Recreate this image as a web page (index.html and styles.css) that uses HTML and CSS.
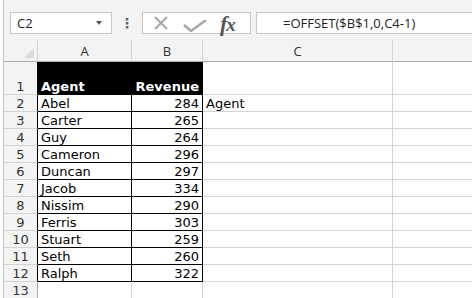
FILE: index.html
```html
<!DOCTYPE html>
<html lang="en">
<head>
  <meta charset="UTF-8" />
  <title>OFFSET example</title>
  <link rel="stylesheet" href="styles.css">
</head>
<body>
  <div class="app">
    <!-- Formula bar -->
    <div class="formula-bar">
      <div class="name-box">
        <span>C2</span>
        <span class="arrow"></span>
      </div>
      <div class="dots">⋮</div>
      <div class="fx-box">
        <svg class="ico" width="16" height="16" viewBox="0 0 16 16">
          <path d="M2 2 L14 14 M14 2 L2 14" stroke="#a8a8a8" stroke-width="2" fill="none"/>
        </svg>
        <svg class="ico ico-check" width="24" height="12" viewBox="0 0 24 12">
          <path d="M1 5 L8 11 L23 0" stroke="#a8a8a8" stroke-width="2.6" fill="none"/>
        </svg>
        <span class="fx">f<i>x</i></span>
      </div>
      <div class="formula">=OFFSET($B$1,0,C4-1)</div>
    </div>

    <!-- Sheet -->
    <div class="sheet" id="sheet">
      <div class="corner"><span class="tri"></span></div>
      <div class="col-head">A</div>
      <div class="col-head">B</div>
      <div class="col-head">C</div>
      <div class="col-head last"></div>
    </div>
  </div>

  <script>
    const rows = [
      ["Abel", 284], ["Carter", 265], ["Guy", 264], ["Cameron", 296],
      ["Duncan", 297], ["Jacob", 334], ["Nissim", 290], ["Ferris", 303],
      ["Stuart", 259], ["Seth", 260], ["Ralph", 322]
    ];

    const sheet = document.getElementById("sheet");

    function cell(cls, text) {
      const d = document.createElement("div");
      d.className = cls;
      d.textContent = text || "";
      sheet.appendChild(d);
    }

    // header row 1
    cell("row-head tall edge", "1");
    cell("cell tall dark", "Agent");
    cell("cell tall dark num", "Revenue");
    cell("cell tall", "");
    cell("cell tall last", "");

    rows.forEach((r, i) => {
      cell("row-head edge", i + 2);
      cell("cell data", r[0]);
      cell("cell data num", r[1]);
      cell("cell", i === 0 ? "Agent" : "");
      cell("cell last", "");
    });

    cell("row-head", "13");
    cell("cell", "");
    cell("cell", "");
    cell("cell", "");
    cell("cell last", "");
  </script>
</body>
</html>
```

FILE: styles.css
```css
* {
  box-sizing: border-box;
}

body {
  margin: 0;
  background: #fff;
  font-family: 'DejaVu Sans', Verdana, sans-serif;
  overflow: hidden;
}

.app {
  margin-left: 3px;
  border-left: 1px solid #c4c4c4;
  height: 298px;
  background: #f3f3f3;
}

/* formula bar */
.formula-bar {
  display: flex;
  align-items: center;
  height: 40px;
  padding: 12px 0 6px 6px;
}

.name-box {
  flex: none;
  width: 102px;
  height: 22px;
  background: #fff;
  border: 1px solid #c6c6c6;
  display: flex;
  align-items: center;
  justify-content: space-between;
  padding: 0 9px 0 6px;
  font-family: 'Open Sans', 'Liberation Sans', sans-serif;
  font-size: 13px;
  color: #222;
}

.arrow {
  width: 0;
  height: 0;
  border-left: 3px solid transparent;
  border-right: 3px solid transparent;
  border-top: 4px solid #555;
}

.dots {
  flex: none;
  width: 30px;
  text-align: center;
  color: #666;
  font-size: 14px;
  font-weight: bold;
}

.fx-box {
  flex: none;
  width: 109px;
  height: 22px;
  background: #fff;
  border: 1px solid #c6c6c6;
  display: flex;
  align-items: center;
  padding-left: 10px;
}

.ico {
  display: block;
}

.ico-check {
  margin-left: 14px;
  margin-top: 6px;
}

.fx {
  margin-left: 13px;
  margin-top: 2px;
  font-family: 'Liberation Serif', serif;
  font-style: italic;
  font-weight: bold;
  font-size: 22px;
  color: #555;
  line-height: 1;
  letter-spacing: -1px;
}

.fx i {
  font-size: 19px;
}

.formula {
  flex: 1;
  height: 22px;
  margin-left: 5px;
  background: #fff;
  border: 1px solid #c6c6c6;
  border-right: none;
  padding-left: 26px;
  font-family: 'Open Sans', 'Liberation Sans', sans-serif;
  font-size: 13px;
  line-height: 20px;
  color: #222;
}

/* sheet grid */
.sheet {
  display: grid;
  grid-template-columns: 34px 94px 71px 190px 1fr;
  grid-auto-rows: 17px;
  grid-template-rows: 22px 33px;
  background: #fff;
}

.corner,
.col-head {
  background: #f3f3f3;
  border-bottom: 1px solid #ababab;
  border-right: 1px solid #d4d4d4;
}

.corner {
  position: relative;
}

.tri {
  position: absolute;
  right: 3px;
  bottom: 3px;
  width: 0;
  height: 0;
  border-left: 10px solid transparent;
  border-bottom: 10px solid #dcdcdc;
}

.col-head {
  font-family: 'Open Sans', 'Liberation Sans', sans-serif;
  font-size: 13px;
  color: #333;
  text-align: center;
  line-height: 22px;
}

.col-head.last {
  border-right: none;
}

.row-head {
  background: #f3f3f3;
  border-right: 1px solid #ababab;
  border-bottom: 1px solid #d4d4d4;
  text-align: center;
  font-size: 13px;
  color: #333;
  line-height: 17px;
}

.row-head.edge {
  border-right-color: #000;
}

.cell {
  border-right: 1px solid #d4d4d4;
  border-bottom: 1px solid #d4d4d4;
  font-size: 13px;
  color: #000;
  line-height: 17px;
  padding: 0 3px;
  white-space: nowrap;
}

.cell.last {
  border-right: none;
}

.tall {
  padding-top: 17px;
  line-height: 15px;
}

.dark {
  background: #000;
  color: #fff;
  font-weight: bold;
  border-color: #000;
}

.data {
  border-color: #000;
}

.num {
  text-align: right;
}
```
